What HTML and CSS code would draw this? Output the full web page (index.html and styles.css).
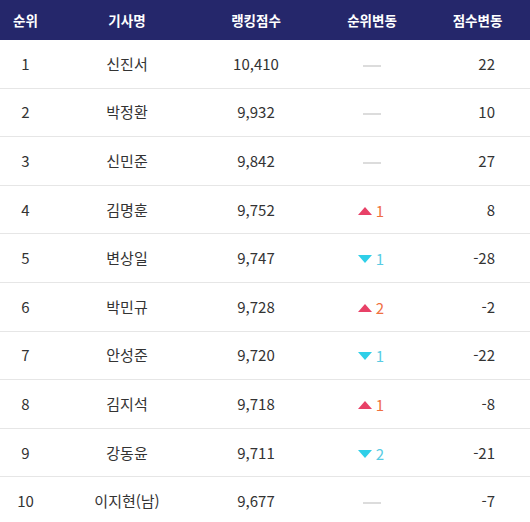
FILE: index.html
```html
<!DOCTYPE html>
<html lang="ko">
<head>
<meta charset="utf-8">
<link rel="stylesheet" href="styles.css">
</head>
<body>
<div class="table">
  <div class="row head">
    <div class="c rank">순위</div>
    <div class="c name">기사명</div>
    <div class="c score">랭킹점수</div>
    <div class="c move">순위변동</div>
    <div class="c delta">점수변동</div>
  </div>
  <div class="row"><div class="c rank">1</div><div class="c name">신진서</div><div class="c score">10,410</div><div class="c move"><span class="dash"></span></div><div class="c delta num">22</div></div>
  <div class="row"><div class="c rank">2</div><div class="c name">박정환</div><div class="c score">9,932</div><div class="c move"><span class="dash"></span></div><div class="c delta num">10</div></div>
  <div class="row"><div class="c rank">3</div><div class="c name">신민준</div><div class="c score">9,842</div><div class="c move"><span class="dash"></span></div><div class="c delta num">27</div></div>
  <div class="row"><div class="c rank">4</div><div class="c name">김명훈</div><div class="c score">9,752</div><div class="c move"><span class="up"><i class="tri-up"></i>1</span></div><div class="c delta num">8</div></div>
  <div class="row"><div class="c rank">5</div><div class="c name">변상일</div><div class="c score">9,747</div><div class="c move"><span class="down"><i class="tri-down"></i>1</span></div><div class="c delta num">-28</div></div>
  <div class="row"><div class="c rank">6</div><div class="c name">박민규</div><div class="c score">9,728</div><div class="c move"><span class="up"><i class="tri-up"></i>2</span></div><div class="c delta num">-2</div></div>
  <div class="row"><div class="c rank">7</div><div class="c name">안성준</div><div class="c score">9,720</div><div class="c move"><span class="down"><i class="tri-down"></i>1</span></div><div class="c delta num">-22</div></div>
  <div class="row"><div class="c rank">8</div><div class="c name">김지석</div><div class="c score">9,718</div><div class="c move"><span class="up"><i class="tri-up"></i>1</span></div><div class="c delta num">-8</div></div>
  <div class="row"><div class="c rank">9</div><div class="c name">강동윤</div><div class="c score">9,711</div><div class="c move"><span class="down"><i class="tri-down"></i>2</span></div><div class="c delta num">-21</div></div>
  <div class="row"><div class="c rank">10</div><div class="c name">이지현(남)</div><div class="c score">9,677</div><div class="c move"><span class="dash"></span></div><div class="c delta num">-7</div></div>
</div>
</body>
</html>
```
FILE: styles.css
```css
html, body {
  margin: 0;
  padding: 0;
  background: #fff;
}
body {
  font-family: "Noto Sans CJK KR", "Noto Sans", sans-serif;
  font-size: 15px;
  color: #333;
}
.table {
  width: 530px;
}
.row {
  display: grid;
  grid-template-columns: 51px 152px 106px 126px 95px;
  height: 47.6px;
  border-bottom: 1px solid #e6e6e6;
  align-items: center;
}
.row.head {
  background: #25276b;
  color: #fff;
  font-weight: 700;
  font-size: 13.5px;
  height: 40px;
  border-bottom: none;
}
.head .delta {
  padding-right: 10px;
}
.c {
  text-align: center;
  line-height: 20px;
}
.row .num {
  text-align: right;
  padding-right: 35px;
}
.dash {
  display: inline-block;
  width: 18px;
  height: 2px;
  background: #dcdcdc;
  vertical-align: middle;
}
.up, .down {
  display: inline-flex;
  align-items: center;
  gap: 4px;
  margin-left: -2px;
}
.up { color: #f0703f; }
.down { color: #58cbe3; }
.tri-up {
  width: 0;
  height: 0;
  border-left: 7px solid transparent;
  border-right: 7px solid transparent;
  border-bottom: 8px solid #e84167;
}
.tri-down {
  width: 0;
  height: 0;
  border-left: 7px solid transparent;
  border-right: 7px solid transparent;
  border-top: 8px solid #2fcfe8;
}
```
